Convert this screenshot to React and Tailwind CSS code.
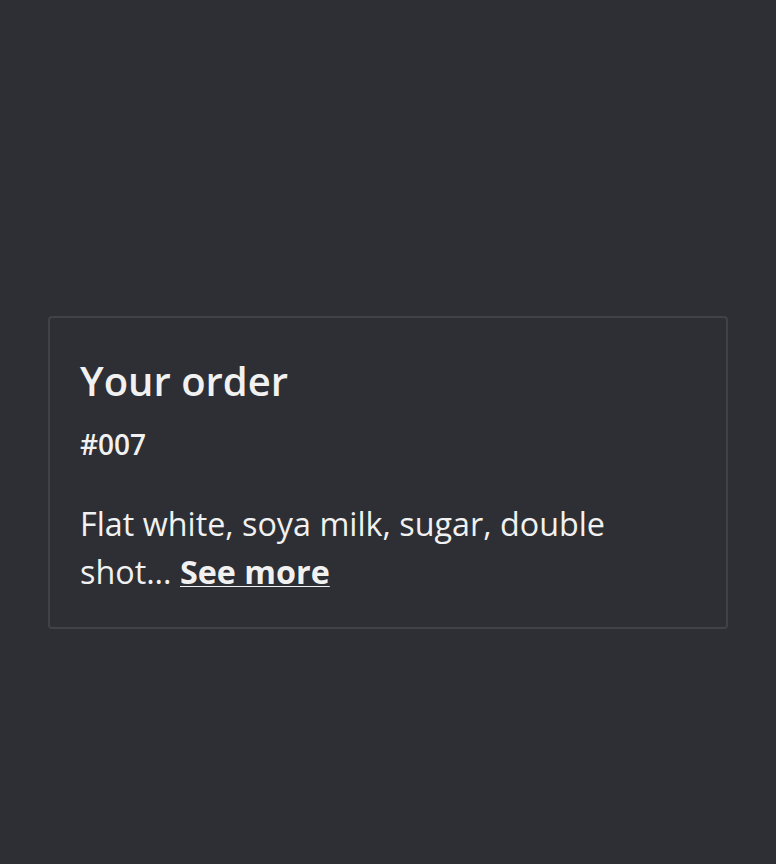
export default function App() {
  return (
    <div
      className="min-h-screen bg-[#2d2f34] px-12 pt-[316px]"
      style={{ fontFamily: '"Open Sans", sans-serif' }}
    >
      <div className="rounded border-2 border-[#3f4247] px-[30px] pt-[31px] pb-[32px] text-[#f1f1f1]">
        <h1 className="text-[40px] font-semibold leading-[64px]">Your order</h1>
        <div className="mt-[11px] text-[28px] font-semibold leading-[40px]">#007</div>
        <p className="mt-[35px] text-[32.3px] leading-[48px]">
          Flat white, soya milk, sugar, double shot...{" "}
          <a href="#" className="font-bold underline decoration-1 underline-offset-2">
            See more
          </a>
        </p>
      </div>
    </div>
  );
}
